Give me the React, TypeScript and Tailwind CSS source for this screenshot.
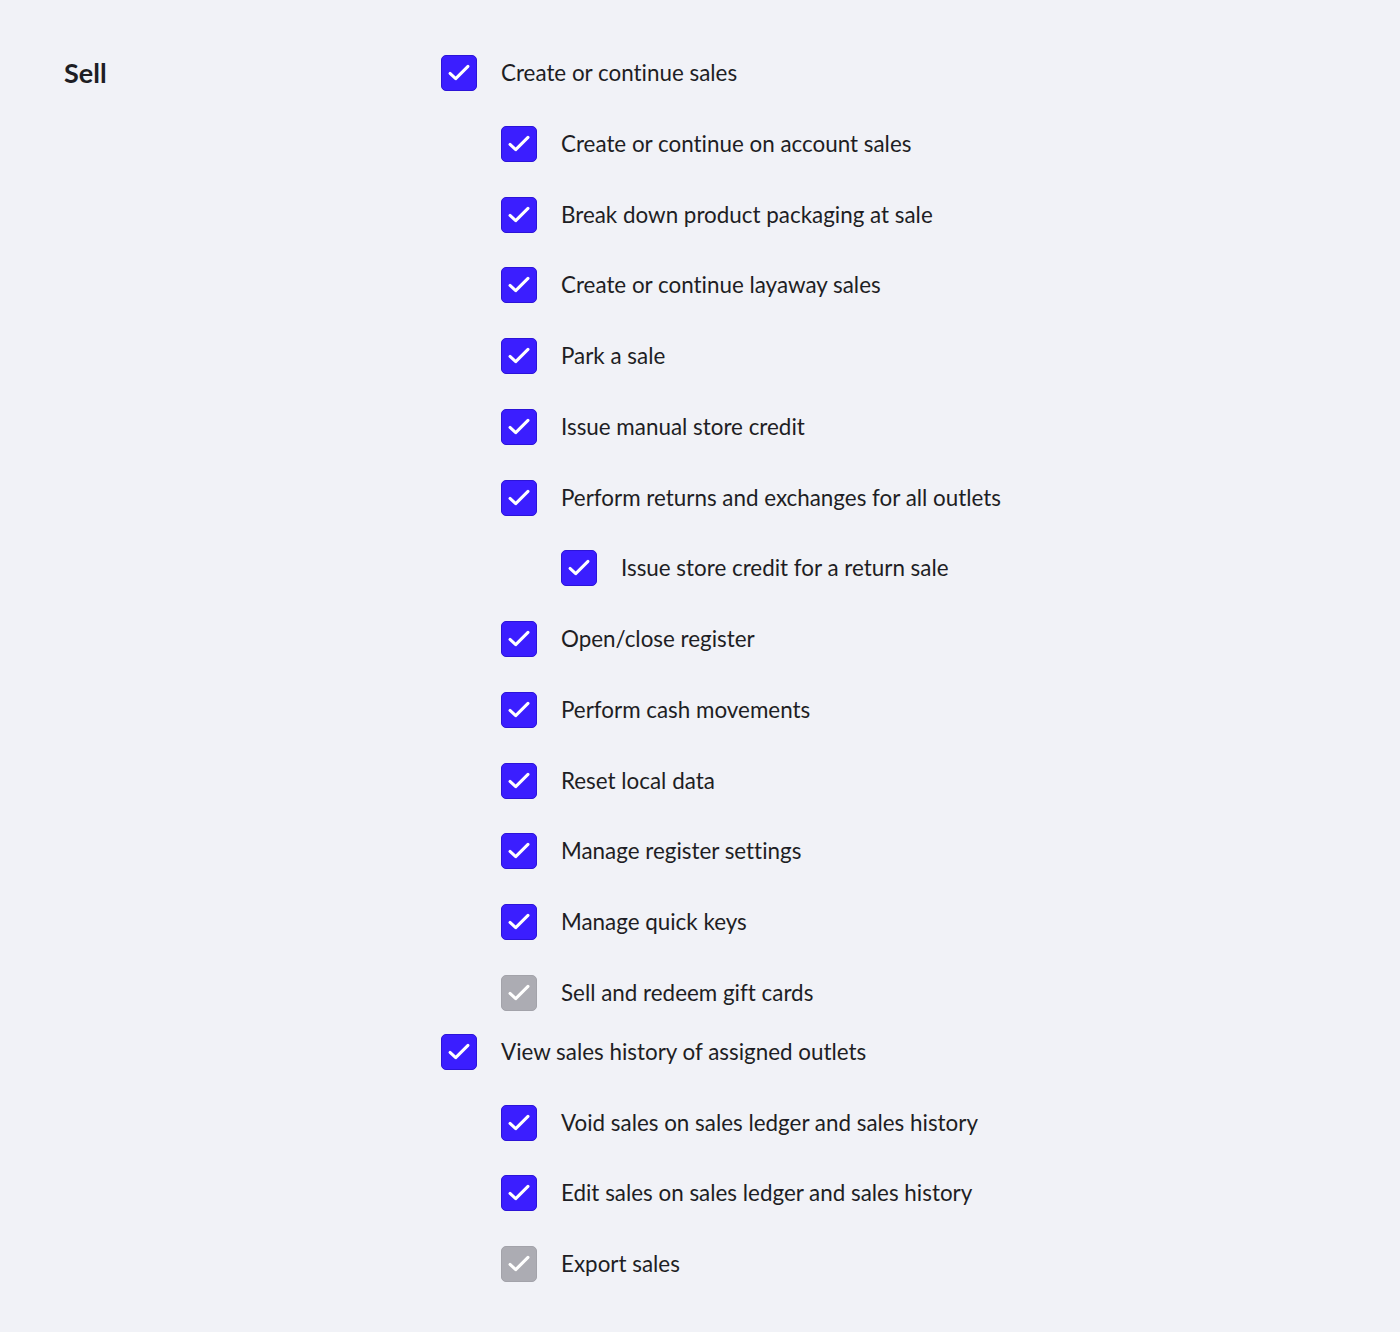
import React from 'react';

type Permission = {
  label: string;
  checked?: boolean;
  disabled?: boolean;
  children?: Permission[];
};

const permissions: Permission[] = [
  {
    label: 'Create or continue sales',
    checked: true,
    children: [
      { label: 'Create or continue on account sales', checked: true },
      { label: 'Break down product packaging at sale', checked: true },
      { label: 'Create or continue layaway sales', checked: true },
      { label: 'Park a sale', checked: true },
      { label: 'Issue manual store credit', checked: true },
      {
        label: 'Perform returns and exchanges for all outlets',
        checked: true,
        children: [{ label: 'Issue store credit for a return sale', checked: true }],
      },
      { label: 'Open/close register', checked: true },
      { label: 'Perform cash movements', checked: true },
      { label: 'Reset local data', checked: true },
      { label: 'Manage register settings', checked: true },
      { label: 'Manage quick keys', checked: true },
      { label: 'Sell and redeem gift cards', checked: true, disabled: true },
    ],
  },
  {
    label: 'View sales history of assigned outlets',
    checked: true,
    children: [
      { label: 'Void sales on sales ledger and sales history', checked: true },
      { label: 'Edit sales on sales ledger and sales history', checked: true },
      { label: 'Export sales', checked: true, disabled: true },
    ],
  },
];

function Checkbox({ disabled }: { disabled?: boolean }) {
  return (
    <span
      className={
        disabled
          ? 'flex h-[36px] w-[36px] shrink-0 items-center justify-center rounded-[5px] border border-[#a3a3aa] bg-[#acacb3]'
          : 'flex h-[36px] w-[36px] shrink-0 items-center justify-center rounded-[5px] border border-[#2c14d8] bg-[#3b1eff]'
      }
    >
      <svg width="36" height="36" viewBox="0 0 36 36" fill="none">
        <path
          d="M8.5 18.5 L14.5 24 L27.5 11"
          stroke="white"
          strokeWidth="3.2"
          strokeLinecap="round"
          strokeLinejoin="round"
        />
      </svg>
    </span>
  );
}

function PermissionRow({ item }: { item: Permission }) {
  return (
    <li>
      <label className="flex items-center gap-6 h-[36px]">
        <Checkbox disabled={item.disabled} />
        <span className="text-[22.4px] leading-[34px] text-[#1e1e24] [font-variant-ligatures:none]">
          {item.label}
        </span>
      </label>
      {item.children && (
        <ul className="pl-[60px]">
          {item.children.map((child) => (
            <div key={child.label} className="mt-[34.75px]">
              <PermissionRow item={child} />
            </div>
          ))}
        </ul>
      )}
    </li>
  );
}

export default function App() {
  return (
    <div
      className="min-h-[1332px] bg-[#f1f2f7] pt-[55px]"
      style={{ fontFamily: 'Lato, "Open Sans", sans-serif' }}
    >
      <div className="flex">
        <div className="w-[441px] pl-16 shrink-0">
          <h2 className="text-[27px] font-bold leading-[36px] text-[#1e1e24]">Sell</h2>
        </div>
        <ul className="flex flex-col gap-[23px]">
          {permissions.map((p) => (
            <PermissionRow key={p.label} item={p} />
          ))}
        </ul>
      </div>
    </div>
  );
}
